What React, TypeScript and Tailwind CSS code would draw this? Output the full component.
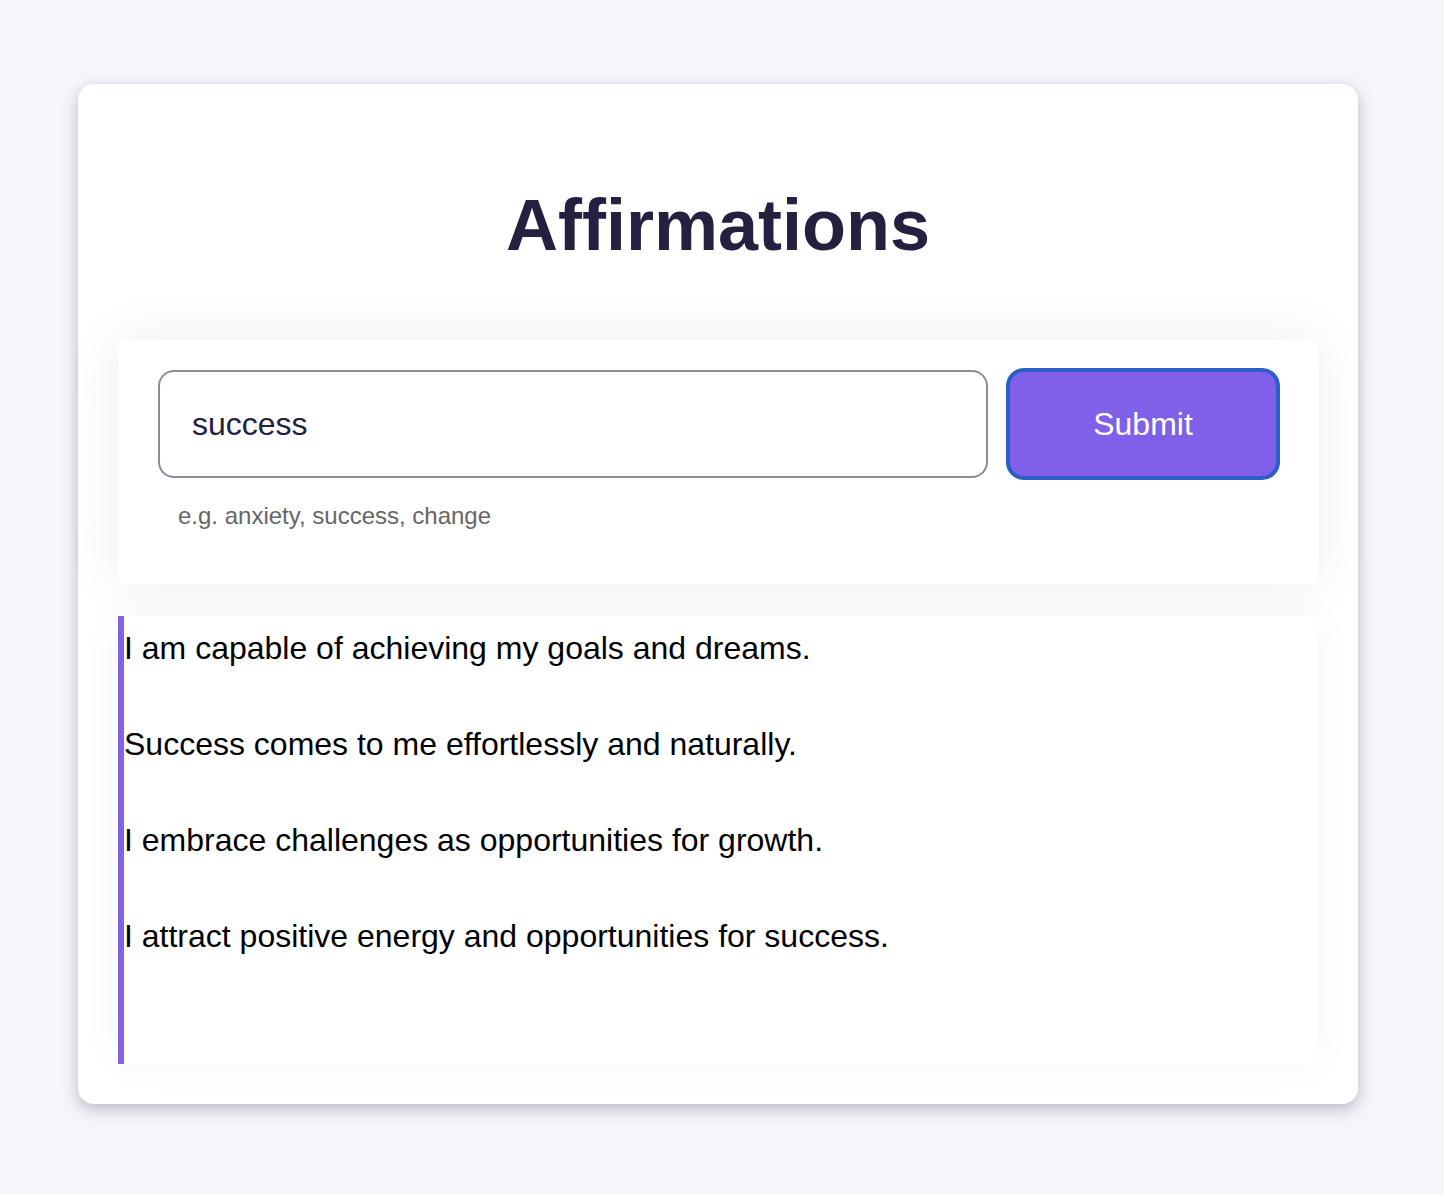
import React from "react";

const items = [
  "I am capable of achieving my goals and dreams.",
  "Success comes to me effortlessly and naturally.",
  "I embrace challenges as opportunities for growth.",
  "I attract positive energy and opportunities for success.",
];

export default function App() {
  return (
    <div
      className="min-h-[1194px] w-full bg-[#f7f5fc] pt-[84px] pb-[90px]"
      style={{ fontFamily: '"Liberation Sans", Arial, Helvetica, sans-serif' }}
    >
      <div className="ml-[78px] w-[1280px] rounded-[16px] bg-white px-[40px] pt-[105px] pb-[40px] shadow-[0_5px_16px_rgba(30,20,50,0.28)]">
        <h1 className="text-center text-[72px] font-bold leading-none text-[#25203f]">
          Affirmations
        </h1>
        <div className="mt-[79px] rounded-[6px] bg-white pt-[28px] pb-[54px] pl-[40px] pr-[38px] shadow-[0_0_60px_rgba(0,0,0,0.07)]">
          <div className="flex items-center gap-[18px]">
            <input
              readOnly
              value="success"
              className="h-[108px] w-[830px] rounded-[16px] border-2 border-[#8e8a9c] bg-white pl-[32px] text-[32px] text-[#25203f] outline-none"
            />
            <button className="flex h-[112px] w-[274px] items-center justify-center rounded-[18px] border-4 border-[#2b5fc8] bg-[#8060e8] text-[32px] text-white">
              Submit
            </button>
          </div>
          <div className="mt-[22px] pl-[20px] text-[24px] leading-[28px] text-[#666666]">
            e.g. anxiety, success, change
          </div>
        </div>
        <div className="mt-[32px] flex h-[448px] flex-col gap-[59px] border-l-[6px] border-[#8460e6] bg-white pt-[14px] shadow-[0_0_40px_rgba(0,0,0,0.04)]">
          {items.map((t) => (
            <p key={t} className="text-[32px] leading-[37px] text-black">
              {t}
            </p>
          ))}
        </div>
      </div>
    </div>
  );
}
